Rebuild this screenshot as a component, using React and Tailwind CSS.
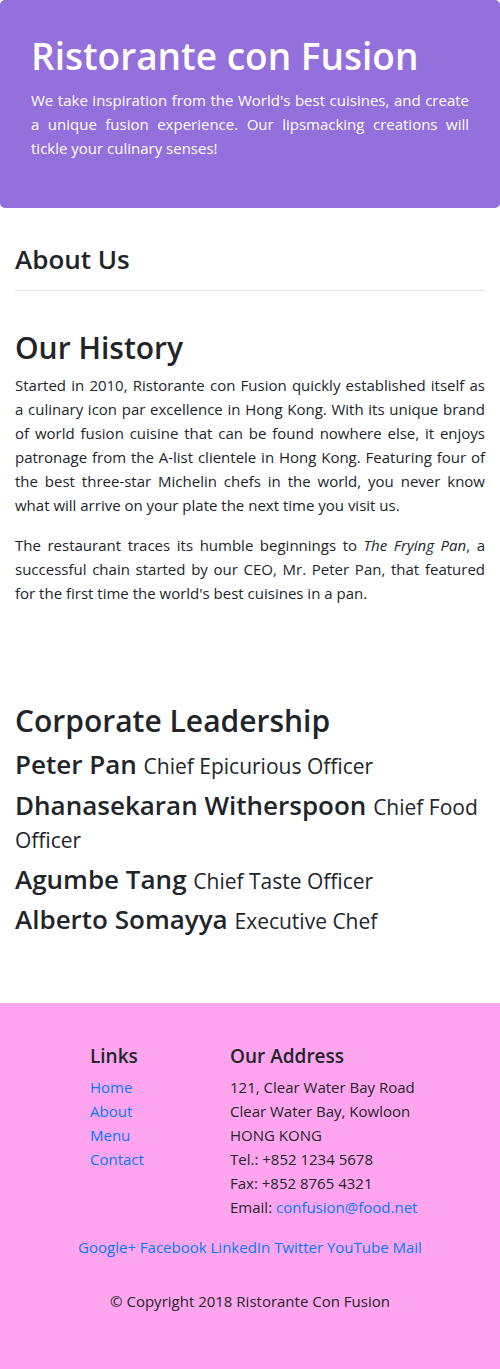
export default function App() {
  const leaders = [
    { name: 'Peter Pan', role: 'Chief Epicurious Officer' },
    { name: 'Dhanasekaran Witherspoon', role: 'Chief Food Officer' },
    { name: 'Agumbe Tang', role: 'Chief Taste Officer' },
    { name: 'Alberto Somayya', role: 'Executive Chef' },
  ]

  return (
    <div className="min-h-[1369px] bg-white text-[#212529]" style={{ fontFamily: '"Open Sans", "Noto Sans", sans-serif' }}>
      <header className="rounded-[5px] bg-[#9370DB] px-[31px] pb-[48px] pt-[32px] text-white">
        <h1 className="mb-2 text-[37px] font-semibold leading-[48px]">Ristorante con Fusion</h1>
        <p className="text-justify text-[15px] leading-6">
          We take inspiration from the World's best cuisines, and create a unique fusion experience. Our
          lipsmacking creations will tickle your culinary senses!
        </p>
      </header>

      <main className="px-[15px]">
        <h3 className="mt-[34px] text-[26px] font-semibold leading-[34px]">About Us</h3>
        <hr className="mt-[14px] border-t border-[#e5e5e5]" />

        <h2 className="mt-[38px] text-[30px] font-semibold leading-[38px]">Our History</h2>
        <div className="mt-[6px] text-justify text-[15px] leading-6">
          <p className="mb-4">
            Started in 2010, Ristorante con Fusion quickly established itself as a culinary icon par excellence in
            Hong Kong. With its unique brand of world fusion cuisine that can be found nowhere else, it enjoys
            patronage from the A-list clientele in Hong Kong. Featuring four of the best three-star Michelin chefs in
            the world, you never know what will arrive on your plate the next time you visit us.
          </p>
          <p>
            The restaurant traces its humble beginnings to <em>The Frying Pan</em>, a successful chain started by
            our CEO, Mr. Peter Pan, that featured for the first time the world's best cuisines in a pan.
          </p>
        </div>

        <h2 className="mt-[97px] text-[30px] font-semibold leading-[38px]">Corporate Leadership</h2>
        <div className="mt-[8px]">
          {leaders.map((l) => (
            <h3 key={l.name} className="mb-[7px] text-[26px] font-semibold leading-[33.6px]">
              {l.name} <span className="text-[21px] font-normal leading-none">{l.role}</span>
            </h3>
          ))}
        </div>
      </main>

      <footer className="mt-[66px] bg-[#ffa5ef] pb-[56px] pt-[41px]">
        <div className="flex pl-[90px]">
          <div className="w-[140px]">
            <h5 className="mb-[7px] text-[19px] font-semibold leading-6">Links</h5>
            <ul className="text-[15px] leading-6 text-[#007bff]">
              <li>Home</li>
              <li>About</li>
              <li>Menu</li>
              <li>Contact</li>
            </ul>
          </div>
          <div>
            <h5 className="mb-[7px] text-[19px] font-semibold leading-6">Our Address</h5>
            <address className="text-[15px] not-italic leading-6">
              121, Clear Water Bay Road
              <br />
              Clear Water Bay, Kowloon
              <br />
              HONG KONG
              <br />
              Tel.: +852 1234 5678
              <br />
              Fax: +852 8765 4321
              <br />
              Email: <a className="text-[#007bff]">confusion@food.net</a>
            </address>
          </div>
        </div>
        <div className="mt-4 text-center text-[15px] leading-6 text-[#007bff]">
          Google+ Facebook LinkedIn Twitter YouTube Mail
        </div>
        <p className="mt-[30px] text-center text-[15px] leading-6">© Copyright 2018 Ristorante Con Fusion</p>
      </footer>
    </div>
  )
}
